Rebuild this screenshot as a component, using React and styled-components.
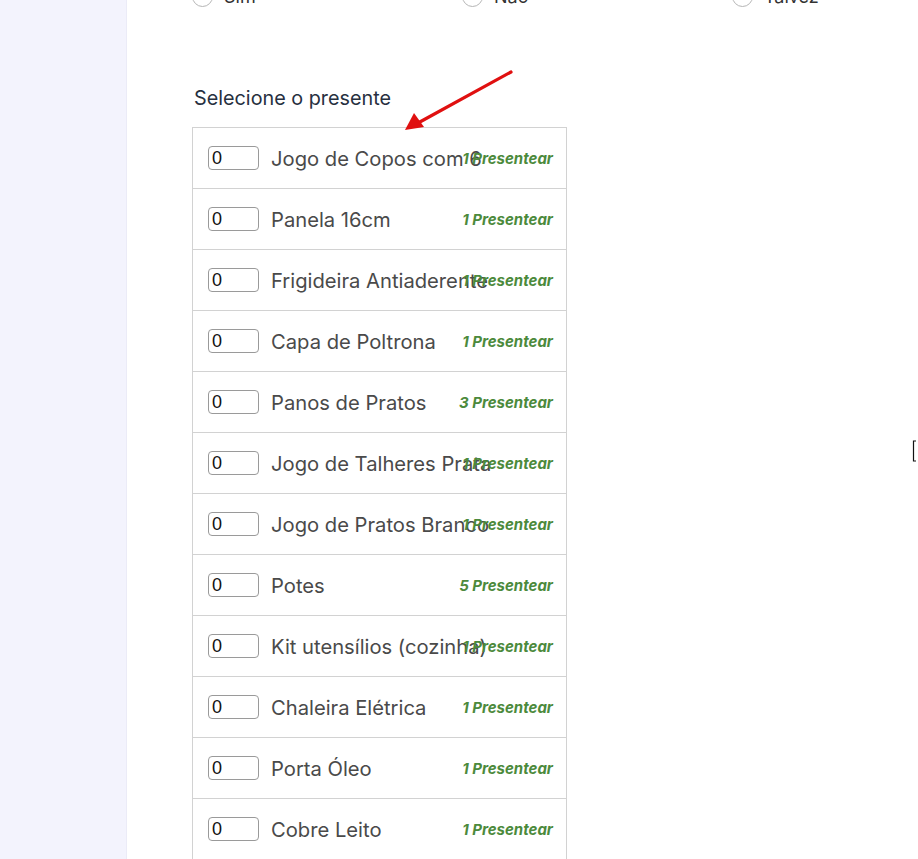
import React from 'react';
import styled, { createGlobalStyle } from 'styled-components';

const gifts = [
  { name: 'Jogo de Copos com 6', qty: 1 },
  { name: 'Panela 16cm', qty: 1 },
  { name: 'Frigideira Antiaderente', qty: 1 },
  { name: 'Capa de Poltrona', qty: 1 },
  { name: 'Panos de Pratos', qty: 3 },
  { name: 'Jogo de Talheres Prata', qty: 1 },
  { name: 'Jogo de Pratos Branco', qty: 1 },
  { name: 'Potes', qty: 5 },
  { name: 'Kit utensílios (cozinha)', qty: 1 },
  { name: 'Chaleira Elétrica', qty: 1 },
  { name: 'Porta Óleo', qty: 1 },
  { name: 'Cobre Leito', qty: 1 },
  { name: 'Toalhas de Banho', qty: 2 },
];

const answers = ['Sim', 'Não', 'Talvez'];

const GlobalStyle = createGlobalStyle`
  html, body {
    margin: 0;
    height: 859px;
    overflow: hidden;
    background: #ffffff;
    font-family: Inter, "Liberation Sans", sans-serif;
  }
`;

const Page = styled.div`
  display: flex;
  height: 859px;
  position: relative;
`;

const Sidebar = styled.aside`
  width: 126px;
  flex-shrink: 0;
  background: #f3f3fd;
  border-right: 1px solid #ebebf7;
`;

const Main = styled.main`
  flex: 1;
  padding-left: 65px;
  position: relative;
`;

const RadioRow = styled.div`
  display: grid;
  grid-template-columns: 270px 270px 1fr;
  margin-top: -15px;
`;

const RadioOption = styled.label`
  display: flex;
  align-items: center;
  gap: 11px;
  font-size: 18px;
  color: #333;
  height: 22px;
`;

const RadioCircle = styled.span`
  width: 21px;
  height: 21px;
  border-radius: 50%;
  border: 1px solid #b5b5b5;
  background: #fff;
  box-sizing: border-box;
`;

const Title = styled.h3`
  margin: 78px 0 16px 2px;
  font-size: 19.8px;
  line-height: 26px;
  font-weight: 400;
  color: #27303f;
`;

const GiftTable = styled.div`
  width: 373px;
  border: 1px solid #d2d2d2;
`;

const GiftRow = styled.div`
  position: relative;
  display: flex;
  align-items: center;
  height: 60px;
  padding-left: 15px;
  border-top: 1px solid #d2d2d2;
  &:first-child {
    border-top: none;
  }
`;

const QtyInput = styled.input`
  width: 51px;
  height: 24px;
  box-sizing: border-box;
  border: 1px solid #9a9a9a;
  border-radius: 4px;
  padding: 0 3px;
  font-family: "Liberation Sans", Arial, sans-serif;
  font-size: 18px;
  color: #111;
  margin-right: 12px;
`;

const GiftName = styled.span`
  font-size: 20.2px;
  color: #4a4a4a;
  white-space: nowrap;
`;

const GiftAction = styled.span`
  position: absolute;
  right: 13px;
  top: 50%;
  transform: translateY(-50%);
  font-size: 15px;
  font-weight: 700;
  font-style: italic;
  color: #4c8a3c;
  white-space: nowrap;
`;

const ArrowMark = styled.svg`
  position: absolute;
  left: 400px;
  top: 66px;
  pointer-events: none;
`;

const Pointer = styled.svg`
  position: absolute;
  left: 910px;
  top: 438px;
`;

const App = () => {
  return (
    <>
      <GlobalStyle />
      <Page>
        <Sidebar />
        <Main>
          <RadioRow>
            {answers.map(a => (
              <RadioOption key={a}>
                <RadioCircle />
                {a}
              </RadioOption>
            ))}
          </RadioRow>

          <Title>Selecione o presente</Title>

          <GiftTable>
            {gifts.map(g => (
              <GiftRow key={g.name}>
                <QtyInput type="text" defaultValue="0" readOnly />
                <GiftName>{g.name}</GiftName>
                <GiftAction>{g.qty} Presentear</GiftAction>
              </GiftRow>
            ))}
          </GiftTable>
        </Main>

        {/* red annotation arrow */}
        <ArrowMark width="120" height="72" viewBox="0 0 120 72">
          <line x1="111" y1="6" x2="18" y2="57" stroke="#e01010" strokeWidth="3.2" strokeLinecap="round" />
          <polygon points="5,64 14,47 24,61" fill="#e01010" />
        </ArrowMark>

        {/* text cursor cut by window edge */}
        <Pointer width="8" height="26" viewBox="0 0 8 26">
          <path d="M6 3 H3.5 V23 H6" fill="none" stroke="#111" strokeWidth="1.2" />
        </Pointer>
      </Page>
    </>
  );
};

export default App;
